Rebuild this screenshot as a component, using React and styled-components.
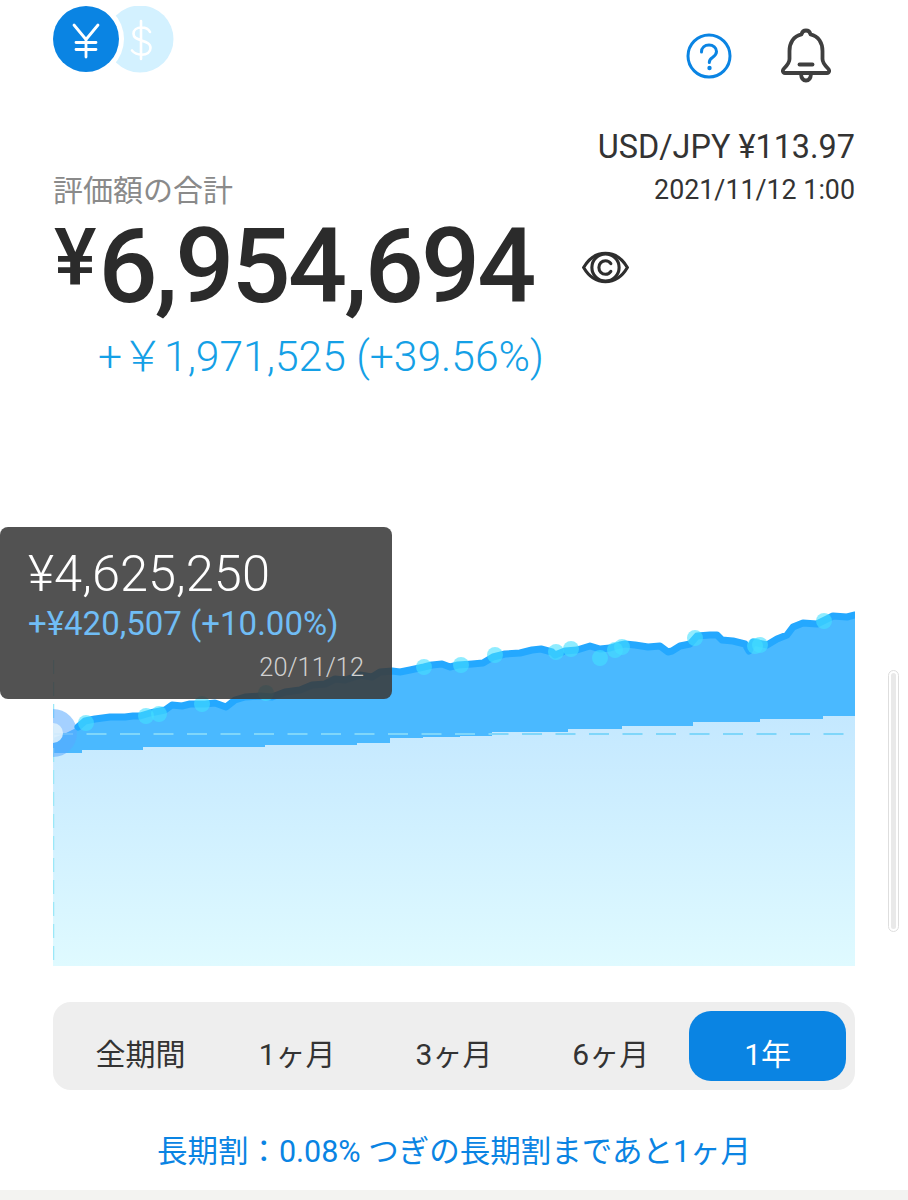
import React from "react";
import styled, { createGlobalStyle } from "styled-components";

const Global = createGlobalStyle`
  html, body { margin: 0; padding: 0; background: #fff; }
  body { font-family: Roboto, "Noto Sans CJK JP", sans-serif; color: #333; }
  * { box-sizing: border-box; }
`;

const Page = styled.div`
  position: relative;
  width: 908px;
  height: 1200px;
  overflow: hidden;
  background: #fff;
  display: flex;
  flex-direction: column;
`;

const Header = styled.header`
  height: 124px;
  padding: 6px 53px 0;
  display: flex;
  justify-content: space-between;
  align-items: flex-start;
`;

const Actions = styled.div`
  display: flex;
  align-items: center;
  gap: 49px;
  margin-top: 22px;
  margin-right: 24px;
`;

const SummaryTop = styled.section`
  padding: 0 53px;
  display: flex;
  justify-content: space-between;
  align-items: flex-end;
`;

const Label = styled.div`
  font-size: 30px;
  line-height: 40px;
  color: #8a8a8a;
  margin-bottom: -1px;
`;

const Rate = styled.div`
  text-align: right;
`;

const RatePair = styled.div`
  font-size: 32.4px;
  line-height: 46px;
  color: #333;
`;

const RateDate = styled.div`
  font-size: 26.8px;
  line-height: 40px;
  color: #333;
`;

const TotalRow = styled.div`
  padding: 0 0 0 53px;
  display: flex;
  align-items: center;
  height: 100px;
  margin-top: 7px;
`;

const Total = styled.div`
  display: flex;
  align-items: flex-start;
  width: 529px;
  color: #2b2b2b;
  font-weight: 500;
`;

const TotalYen = styled.span`
  font-size: 80px;
  line-height: 82px;
  margin-left: 1px;
  margin-right: 2px;
`;

const TotalDigits = styled.span`
  font-size: 104px;
  line-height: 100px;
  letter-spacing: -2.8px;
`;

const Gain = styled.div`
  padding-left: 98px;
  font-size: 42.6px;
  line-height: 56px;
  font-weight: 300;
  color: #14a0e6;
  margin-top: 11px;
`;

const GainSign = styled.span`
  word-spacing: -11px;
`;

const ChartArea = styled.section`
  position: relative;
  height: 439px;
  margin-top: 143px;
  padding-left: 53px;
`;

const ChartSvg = styled.svg`
  display: block;
`;

const Tooltip = styled.div`
  position: absolute;
  left: 0;
  top: 0;
  width: 392px;
  height: 172px;
  padding: 20px 28px 0;
  background: rgba(58, 58, 58, 0.88);
  border-radius: 8px;
  display: flex;
  flex-direction: column;
`;

const TipValue = styled.div`
  font-size: 50.6px;
  line-height: 54px;
  font-weight: 300;
  color: #fff;
`;

const TipDelta = styled.div`
  font-size: 33px;
  line-height: 46px;
  color: #70bdf5;
`;

const TipDate = styled.div`
  font-size: 25.4px;
  line-height: 36px;
  font-weight: 300;
  color: #d0d0d0;
  text-align: right;
  margin-top: 2px;
`;

const ScrollTrack = styled.div`
  position: absolute;
  left: 888px;
  top: 670px;
  width: 11px;
  height: 262px;
  border: 1.5px solid #dedede;
  border-radius: 6px;
  background: #fff;
  padding: 2px;
`;

const ScrollThumb = styled.div`
  width: 100%;
  height: 100%;
  border-radius: 4px;
  background: #e9e9e9;
`;

const Tabs = styled.nav`
  margin: 36px 53px 0;
  height: 88px;
  padding: 9px;
  background: #eee;
  border-radius: 18px;
  display: grid;
  grid-template-columns: repeat(5, 1fr);
`;

const Tab = styled.div`
  height: 70px;
  padding-top: 18px;
  border-radius: 22px;
  text-align: center;
  font-size: 30px;
  line-height: 52px;
  color: ${(p) => (p.$active ? "#fff" : "#333")};
  background: ${(p) => (p.$active ? "#0a84e3" : "transparent")};
`;

const Discount = styled.div`
  margin-top: 41px;
  text-align: center;
  font-size: 30.5px;
  line-height: 42px;
  color: #0a84e3;
`;

const BottomStrip = styled.div`
  margin-top: auto;
  height: 10px;
  background: #f3f3f1;
`;

const lead = [[53, 738], [66, 733]];
const topLine = [
  [78, 727], [85, 721], [95, 719], [110, 717], [125, 717], [133, 716], [140, 716], [150, 713],
  [165, 710], [172, 705], [182, 706], [190, 704], [205, 704], [215, 703], [226, 707], [235, 700], [245, 697], [260, 696],
  [272, 697], [285, 692], [300, 690], [312, 685], [325, 684], [335, 679], [345, 680], [360, 675], [372, 677], [380, 672], [392, 671],
  [400, 672], [410, 670], [424, 667], [432, 665], [442, 664], [450, 667], [458, 665], [472, 664], [483, 663], [493, 657],
  [505, 654], [520, 653], [532, 650], [541, 649], [552, 652], [555, 655], [565, 651], [577, 650], [590, 646], [600, 649], [610, 648],
  [620, 645], [625, 644], [635, 645], [648, 647], [660, 646], [668, 652], [672, 651], [680, 646], [690, 644],
  [697, 636], [710, 635], [717, 635], [722, 640], [733, 641], [745, 644], [749, 651], [753, 642], [767, 645],
  [777, 639], [787, 635], [793, 627], [803, 623], [817, 624], [833, 616], [847, 617], [855, 615],
];
const steps = [
  [53, 753], [82, 750], [143, 747], [265, 745], [357, 743], [390, 738], [423, 737], [460, 736], [492, 732],
  [568, 729], [622, 726], [693, 722], [760, 719], [823, 716],
];
const linePts = topLine.map((p) => p.join(",")).join(" ");
const areaPts = `${lead.map((p) => p.join(",")).join(" ")} ${linePts} 855,966 53,966`;
const stepPts =
  steps
    .map((s, i) => {
      const next = steps[i + 1] ? steps[i + 1][0] : 855;
      return `${s[0]},${s[1]} ${next},${s[1]}`;
    })
    .join(" ") + " 855,966 53,966";
const dots = [
  [86, 723], [146, 716], [159, 714], [202, 704], [266, 693], [424, 667], [461, 665], [495, 655], [556, 652],
  [571, 649], [600, 658], [615, 650], [622, 647], [695, 638], [755, 646], [760, 645], [824, 621],
];

function Coins() {
  return (
    <svg width="122" height="67" viewBox="0 0 122 67" fill="none">
      <circle cx="87" cy="33" r="33.500" fill="#d3f1ff" />
      <circle cx="33" cy="33" r="38" fill="#fff" />
      <circle cx="33" cy="33" r="33" fill="#0a84e3" />
      <path d="M21 19l12 14.500L45 19M33 33.500V51M23 36.500h20M23 43.500h20" stroke="#fff" strokeWidth="2.800" strokeLinecap="round" strokeLinejoin="round" />
      <path d="M97 26c-1.500-3.200-4.800-4.500-8.500-4.500-4.800 0-8 2.600-8 6.200 0 3.900 3 5.100 8 6.800 5.400 1.800 9 3.100 9 7.500 0 4.200-3.600 6.700-8.700 6.700-4 0-7.400-1.400-9.800-4.200M88 15v38" stroke="#fff" strokeWidth="2.600" strokeLinecap="round" />
    </svg>
  );
}

function HelpIcon() {
  return (
    <svg width="46" height="46" viewBox="0 0 46 46" fill="none">
      <circle cx="23" cy="23" r="21" stroke="#0a84e3" strokeWidth="3" />
      <path d="M15.500 19c0-4.300 3.300-7 7.500-7s7.500 2.700 7.500 6.500c0 3-1.800 4.500-4 6-2 1.300-3.200 2.400-3.200 5" stroke="#0a84e3" strokeWidth="3" strokeLinecap="round" />
      <circle cx="23.500" cy="35" r="2.200" fill="#0a84e3" />
    </svg>
  );
}

function BellIcon() {
  return (
    <svg width="50" height="56" viewBox="0 0 50 56" fill="none" stroke="#3f3f3f" strokeWidth="3.800" strokeLinecap="round" strokeLinejoin="round">
      <path d="M25 2.500c-2.800 0-4 1.800-4.500 3.800C12.500 8 8.500 15 8.500 23v8c0 3.600-2 6-5.500 9.500-1.800 1.800-1.400 4.500 1 4.500h42c2.400 0 2.800-2.700 1-4.500-3.500-3.500-5.500-5.900-5.500-9.500v-8c0-8-4-15-12-16.700-.5-2-1.700-3.800-4.500-3.800z" />
      <path d="M18.500 36.500h13" />
      <path d="M20 46c.3 4 2.200 6.500 5 6.500s4.700-2.500 5-6.500" />
    </svg>
  );
}

function EyeIcon() {
  return (
    <svg width="47" height="35" viewBox="0 0 48 36" fill="none" stroke="#2e2e2e" strokeWidth="3.200" strokeLinecap="round">
      <path d="M1.500 18C7 8.500 15 3.500 24 3.500S41 8.500 46.500 18C41 27.500 33 32.500 24 32.500S7 27.500 1.500 18z" />
      <circle cx="24" cy="18" r="14" />
      <path d="M29.500 14c-1.200-1.800-3.300-3-5.500-3-3.800 0-6.800 3.100-6.800 7s3 7 6.800 7c2.200 0 4.300-1.200 5.500-3" />
    </svg>
  );
}

function Chart() {
  return (
    <ChartSvg width="802" height="439" viewBox="53 527 802 439">
      <defs>
        <linearGradient id="low" x1="0" y1="0" x2="0" y2="1">
          <stop offset="0" stopColor="#c4e8ff" />
          <stop offset="1" stopColor="#dffaff" />
        </linearGradient>
        <clipPath id="plot">
          <rect x="53" y="527" width="802" height="439" />
        </clipPath>
      </defs>
      <g clipPath="url(#plot)">
        <polygon points={areaPts} fill="#4ab9ff" />
        <polygon points={stepPts} fill="url(#low)" />
        <line x1="53" y1="734" x2="855" y2="734" stroke="#7fd6fa" strokeWidth="2" strokeDasharray="20 13.500" />
        <line x1="53.500" y1="660" x2="53.500" y2="966" stroke="#9be8f8" strokeWidth="1.500" strokeDasharray="14 8" />
        <circle cx="53" cy="733" r="24" fill="#5aa9ff" opacity="0.55" />
        <circle cx="53" cy="733" r="10" fill="#e3f2fb" opacity="0.85" />
        <polyline points={linePts} fill="none" stroke="#24a8ff" strokeWidth="7" strokeLinejoin="round" strokeLinecap="round" />
        {dots.map(([x, y]) => (
          <circle key={x} cx={x} cy={y} r="8" fill="#45e0ff" opacity="0.6" />
        ))}
      </g>
    </ChartSvg>
  );
}

export default function App() {
  return (
    <Page>
      <Global />
      <Header>
        <Coins />
        <Actions>
          <HelpIcon />
          <BellIcon />
        </Actions>
      </Header>
      <SummaryTop>
        <Label>評価額の合計</Label>
        <Rate>
          <RatePair>USD/JPY ¥113.97</RatePair>
          <RateDate>2021/11/12 1:00</RateDate>
        </Rate>
      </SummaryTop>
      <TotalRow>
        <Total>
          <TotalYen>¥</TotalYen>
          <TotalDigits>6,954,694</TotalDigits>
        </Total>
        <EyeIcon />
      </TotalRow>
      <Gain>
        <GainSign>+ </GainSign>￥1,971,525 (+39.56%)
      </Gain>
      <ChartArea>
        <Chart />
        <Tooltip>
          <TipValue>¥4,625,250</TipValue>
          <TipDelta>+¥420,507 (+10.00%)</TipDelta>
          <TipDate>20/11/12</TipDate>
        </Tooltip>
      </ChartArea>
      <ScrollTrack>
        <ScrollThumb />
      </ScrollTrack>
      <Tabs>
        <Tab>全期間</Tab>
        <Tab>1ヶ月</Tab>
        <Tab>3ヶ月</Tab>
        <Tab>6ヶ月</Tab>
        <Tab $active>1年</Tab>
      </Tabs>
      <Discount>長期割：0.08% つぎの長期割まであと1ヶ月</Discount>
      <BottomStrip />
    </Page>
  );
}
